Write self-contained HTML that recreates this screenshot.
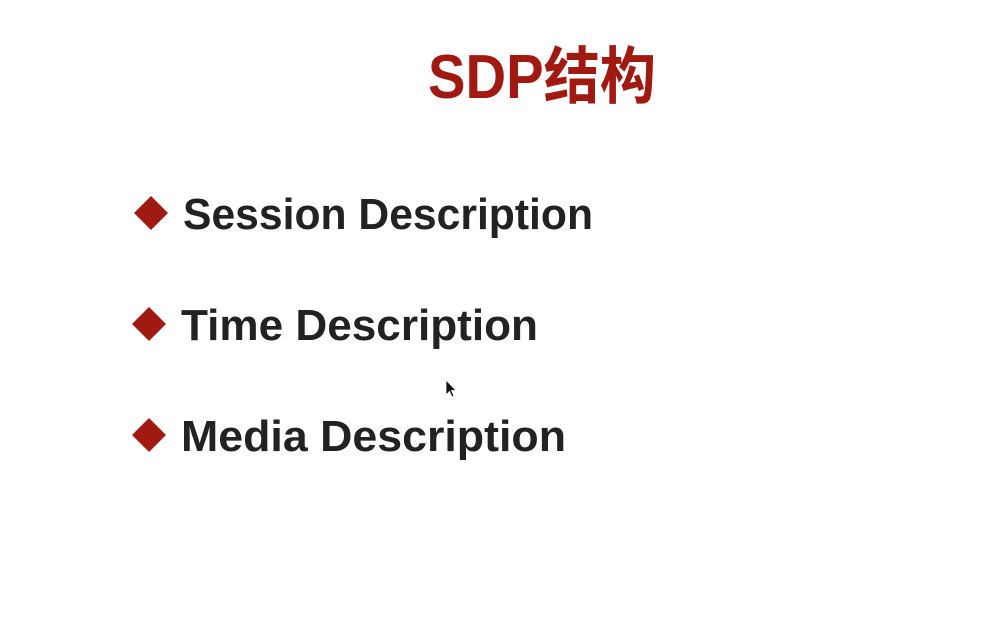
<!DOCTYPE html>
<html><head><meta charset="utf-8"><style>html,body{margin:0;padding:0;background:#fff;}svg{display:block}</style></head>
<body>
<svg width="992" height="622" viewBox="0 0 992 622" xmlns="http://www.w3.org/2000/svg">
<rect width="992" height="622" fill="#fff"/>
<text x="428" y="98" font-family="Liberation Sans, Noto Sans CJK SC, sans-serif" font-weight="bold" font-size="62" fill="#a11a12" textLength="228" lengthAdjust="spacingAndGlyphs">SDP结构</text>
<g fill="#a11a12">
<polygon points="151,196 168,213 151,230 134,213"/>
<polygon points="149,307 166,324 149,341 132,324"/>
<polygon points="149,418 166,435 149,452 132,435"/>
</g>
<g font-family="Liberation Sans, sans-serif" font-weight="bold" font-size="44" fill="#222">
<text x="183" y="229" textLength="410" lengthAdjust="spacingAndGlyphs">Session Description</text>
<text x="181" y="340" textLength="357" lengthAdjust="spacingAndGlyphs">Time Description</text>
<text x="181" y="451" textLength="385" lengthAdjust="spacingAndGlyphs">Media Description</text>
</g>
<path d="M446 380 L446 395 L449.5 391.5 L452 397 L454 396 L451.5 390.5 L456 390.5 Z" fill="#111" stroke="#fff" stroke-width="0.8"/>
</svg>
</body></html>
